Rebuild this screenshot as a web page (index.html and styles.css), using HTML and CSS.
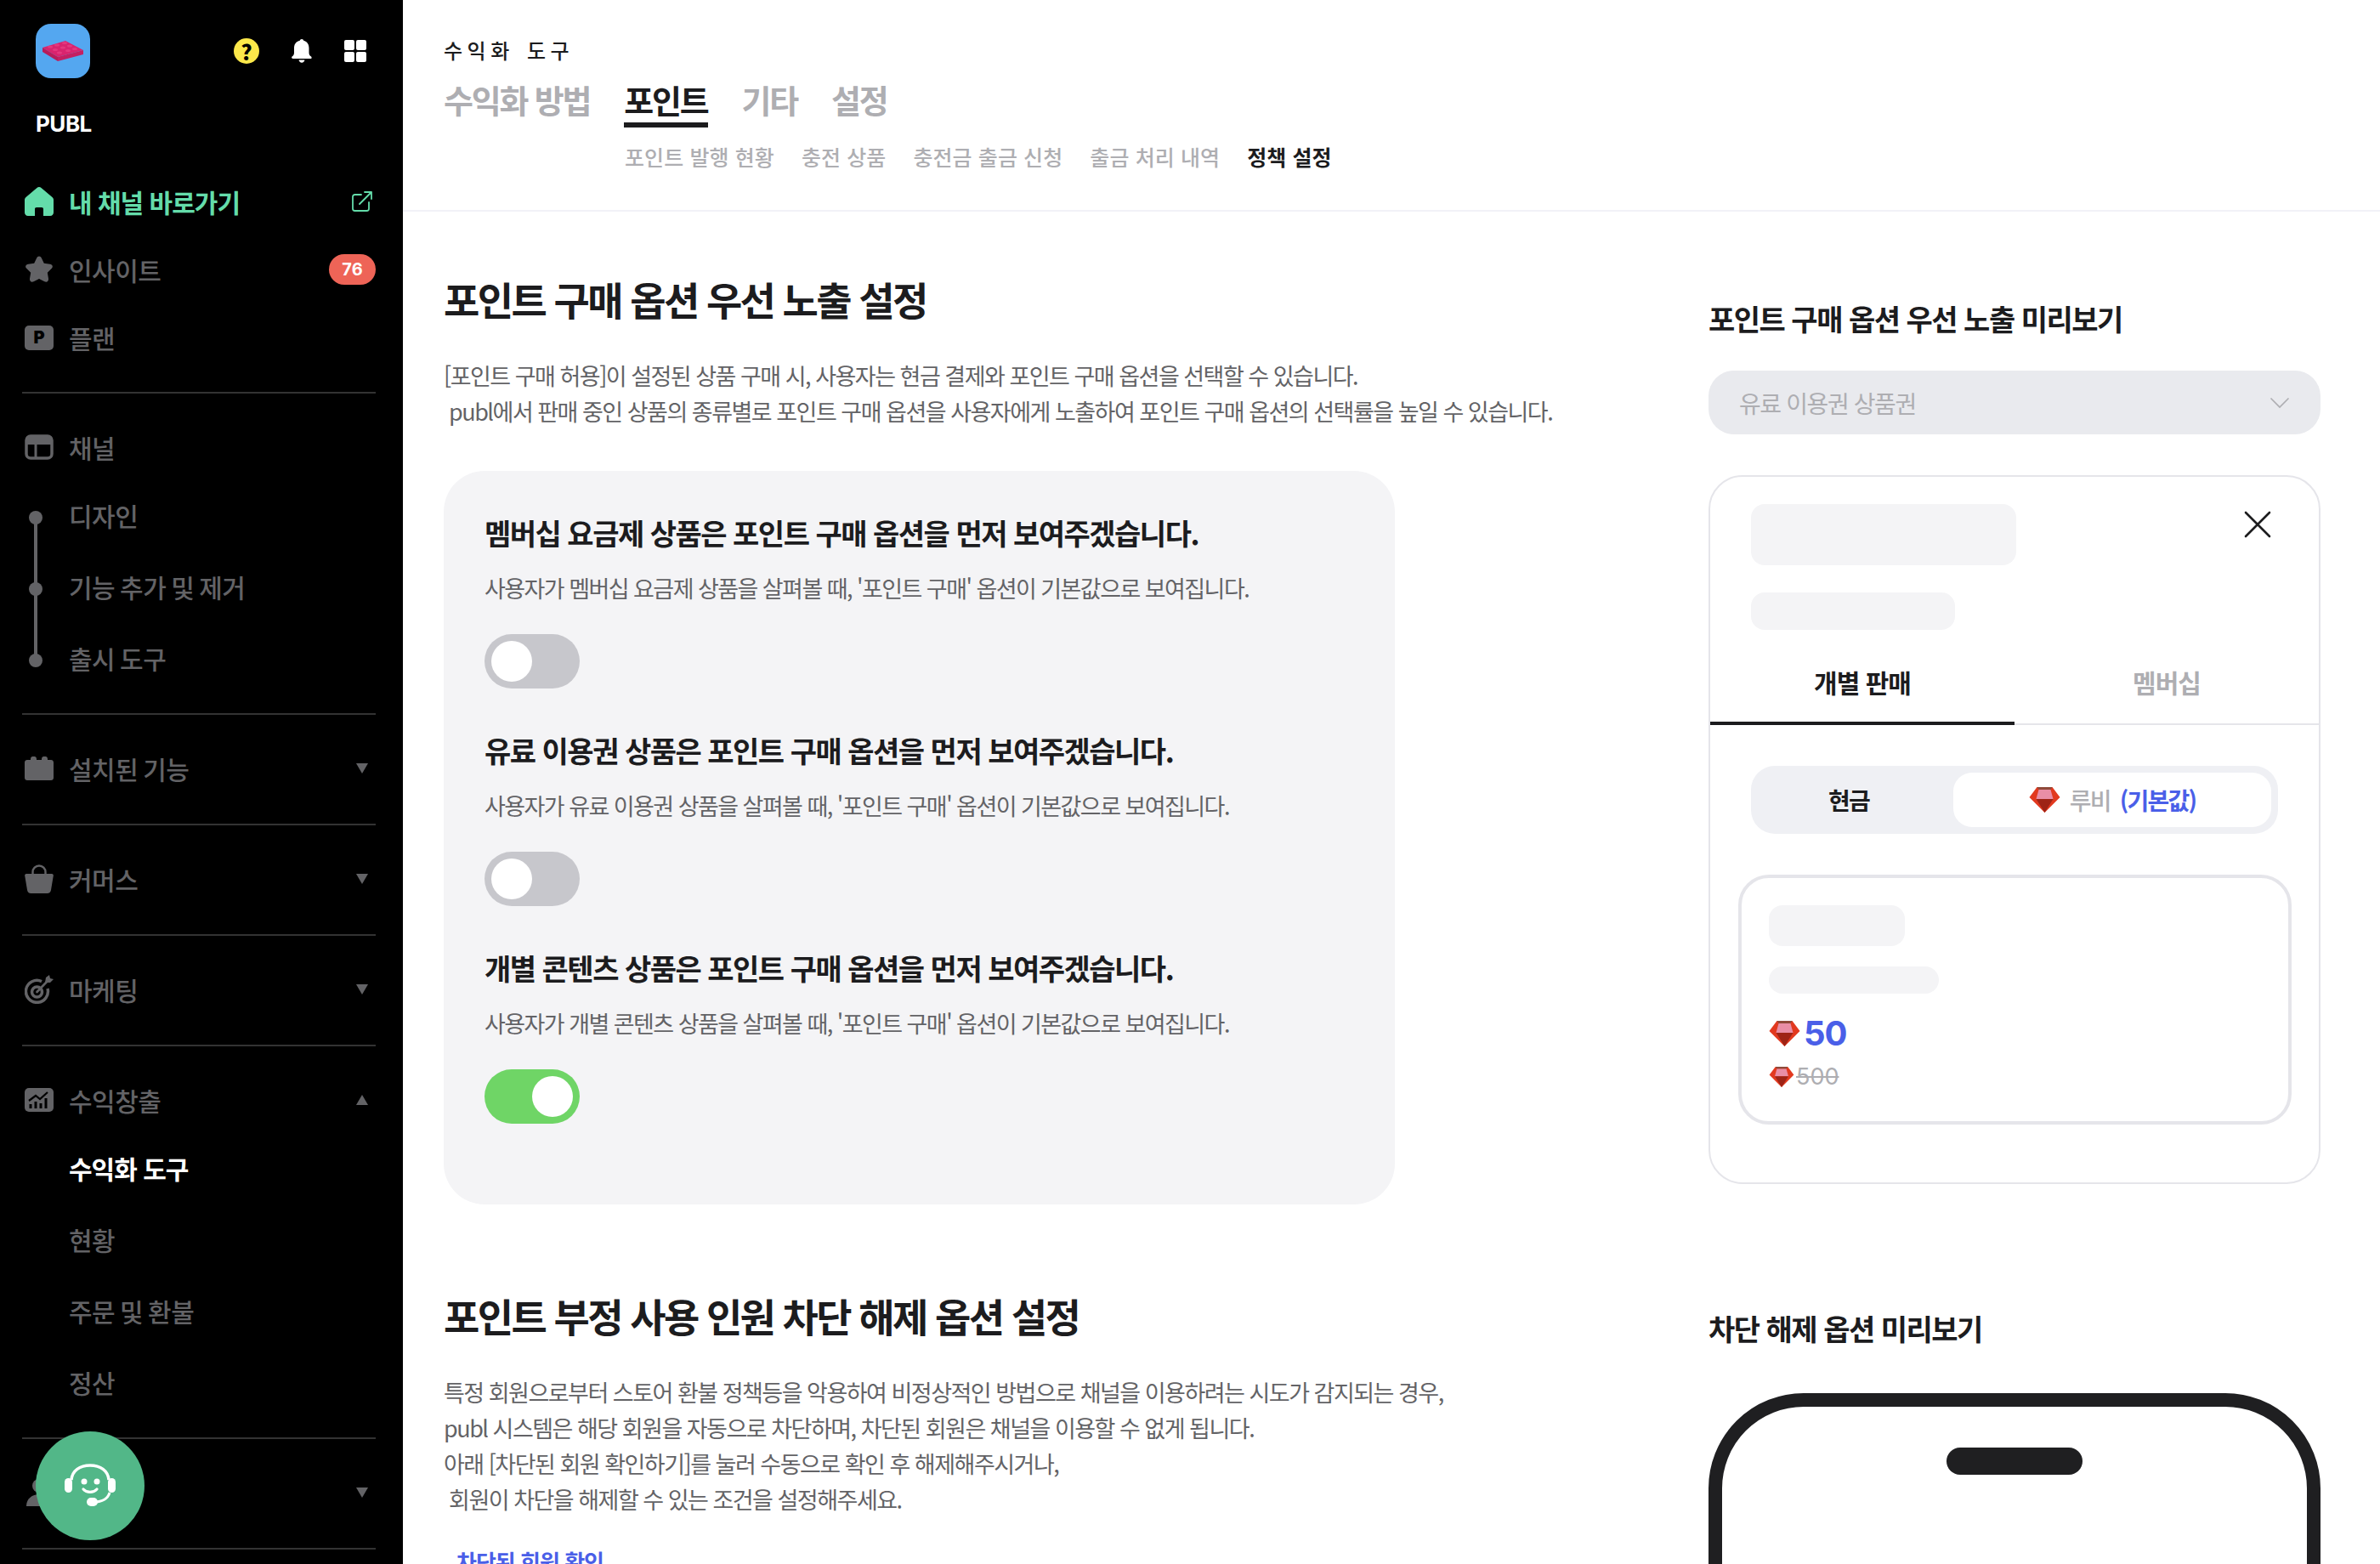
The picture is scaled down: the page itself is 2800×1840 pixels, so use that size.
FILE: index.html
```html
<!DOCTYPE html>
<html lang="ko">
<head>
    <meta charset="UTF-8">
    <meta name="viewport" content="width=device-width, initial-scale=1.0">
    <title>수익화 도구 - 포인트 정책 설정</title>
    <link rel="stylesheet" href="styles.css">
</head>
<body>

    <svg class="sprite" width="0" height="0">
        <symbol id="ruby" viewBox="0 0 36 30">
            <polygon points="9,0 27,0 36,12 18,30 0,12" fill="#e2391f"/>
            <polygon points="9,0 27,0 25,3 11,3" fill="#8f4a3a"/>
            <polygon points="11,3 25,3 28,14 8,14" fill="#e98ea6"/>
            <polygon points="8,14 28,14 18,30" fill="#9e2416"/>
        </symbol>
    </svg>

    <aside class="sidebar">
        <div class="side-top">
            <div class="logo">
                <svg width="48" height="24" viewBox="0 0 48 24">
                    <polygon points="0,8 27,0 48,11 18,19" fill="#d9246e"/>
                    <polygon points="0,8 18,19 18,24 0,13" fill="#b81c5a"/>
                    <polygon points="18,19 48,11 48,16 18,24" fill="#c41f62"/>
                    <g fill="#e4387e">
                        <ellipse cx="9" cy="7" rx="3" ry="1.6"/><ellipse cx="17" cy="5" rx="3" ry="1.6"/><ellipse cx="26" cy="2.500" rx="3" ry="1.6"/>
                        <ellipse cx="15" cy="10.500" rx="3" ry="1.6"/><ellipse cx="24" cy="8" rx="3" ry="1.6"/><ellipse cx="32" cy="6" rx="3" ry="1.6"/>
                        <ellipse cx="20" cy="14" rx="3" ry="1.6"/><ellipse cx="30" cy="11.500" rx="3" ry="1.6"/><ellipse cx="38" cy="9.500" rx="3" ry="1.6"/>
                    </g>
                </svg>
            </div>
            <div class="top-icons">
                <span class="help-icon">?</span>
                <svg width="24" height="28" viewBox="0 0 24 28" fill="#fff">
                    <path d="M12 0c1.200 0 2 .8 2.200 1.800C18.300 2.800 20.500 6.300 20.500 10.500v5.500c0 2 1 3.500 2.500 4.600.8.600 1 2.400-.6 2.400H1.600C0 23-.2 21.200.6 20.600 2.100 19.500 3 18 3 16v-5.500c0-4.200 2.200-7.700 6.800-8.700C10 .8 10.800 0 12 0z"/>
                    <path d="M8.500 24.500h7c-.3 2-1.700 3.200-3.500 3.200s-3.200-1.200-3.500-3.200z"/>
                </svg>
                <div class="grid-icon"><i></i><i></i><i></i><i></i></div>
            </div>
        </div>
        <div class="brand">PUBL</div>

        <div class="nav-group first">
            <a class="nav-item green">
                <svg class="nav-icon" viewBox="0 0 34 34" fill="#64dcaa"><path d="M17 0c1 0 1.800.4 2.500 1l13 11c1 .9 1.500 2 1.500 3.300V30c0 2-1.500 4-4 4h-8V26c0-1.300-.7-2-2-2h-6c-1.300 0-2 .7-2 2v8H4c-2.500 0-4-2-4-4V15.300C0 14 .5 12.900 1.500 12l13-11C15.200.4 16 0 17 0z"/></svg>
                <span>내 채널 바로가기</span>
                <svg class="item-end" width="24" height="24" viewBox="0 0 24 24" fill="none" stroke="#64dcaa" stroke-width="1.800" stroke-linecap="round" stroke-linejoin="round"><path d="M11 4H3.500C2 4 1 5 1 6.500v14C1 22 2 23 3.500 23h14c1.500 0 2.500-1 2.500-2.500V13"/><path d="M9 15L23 1M15 1h8v8"/></svg>
            </a>
            <a class="nav-item">
                <svg class="nav-icon" viewBox="0 0 34 34" fill="#636366"><path d="M17 1.500c1.300 0 2.200.8 2.800 2l3 6.300 7 1c3 .5 4 3 2 5l-5 5 1.200 7c.5 3-2 4.800-4.500 3.500L17 28l-6.500 3.300C8 32.600 5.500 30.800 6 27.800l1.200-7-5-5c-2-2-1-4.500 2-5l7-1 3-6.300c.6-1.200 1.500-2 2.800-2z"/></svg>
                <span>인사이트</span>
                <b class="badge">76</b>
            </a>
            <a class="nav-item">
                <span class="plan-icon">P</span>
                <span>플랜</span>
            </a>
        </div>

        <div class="nav-group">
            <a class="nav-item">
                <svg class="nav-icon" viewBox="0 0 34 30"><rect x="2" y="2" width="30" height="26" rx="5" fill="none" stroke="#636366" stroke-width="3.500"/><path d="M2 12V6a4 4 0 0 1 4-4h22a4 4 0 0 1 4 4v6z" fill="#636366"/><path d="M13 12v15" stroke="#636366" stroke-width="3"/></svg>
                <span>채널</span>
            </a>
            <div class="timeline">
                <a class="sub-item dotted">디자인</a>
                <a class="sub-item dotted">기능 추가 및 제거</a>
                <a class="sub-item dotted">출시 도구</a>
            </div>
        </div>

        <div class="nav-group">
            <a class="nav-item">
                <svg class="nav-icon" viewBox="0 0 34 28" fill="#636366"><path d="M3 4h4V3c0-1.700 1-3 2.500-3h2C13 0 14 1.300 14 3v1h6V3c0-1.700 1-3 2.500-3h2C26 0 27 1.300 27 3v1h4c1.700 0 3 1.300 3 3v18c0 1.700-1.300 3-3 3H3c-1.700 0-3-1.300-3-3V7c0-1.700 1.300-3 3-3z"/></svg>
                <span>설치된 기능</span>
                <i class="caret item-end"></i>
            </a>
        </div>

        <div class="nav-group">
            <a class="nav-item">
                <svg class="nav-icon" viewBox="0 0 34 34"><path d="M9.500 12V9a7.500 7.500 0 0 1 15 0v3" fill="none" stroke="#636366" stroke-width="2.400"/><path d="M2 11h30c1.200 0 2 1 1.800 2.200L31 30c-.4 2.400-2 4-4.500 4h-19C5 34 3.400 32.400 3 30L.2 13.200C0 12 .8 11 2 11z" fill="#636366"/></svg>
                <span>커머스</span>
                <i class="caret item-end"></i>
            </a>
        </div>

        <div class="nav-group">
            <a class="nav-item">
                <svg class="nav-icon" viewBox="0 0 34 34" fill="none" stroke="#636366"><path d="M20 7.600A13 13 0 1 0 27 16" stroke-width="3.500"/><circle cx="14.500" cy="20" r="6" stroke-width="3.500"/><path d="M14.500 20L27 7" stroke-width="2.600" stroke-linecap="round"/><path d="M24 9l1-6 4-3 1 4 4 1-4 4z" fill="#636366" stroke="none"/></svg>
                <span>마케팅</span>
                <i class="caret item-end"></i>
            </a>
        </div>

        <div class="nav-group">
            <a class="nav-item">
                <svg class="nav-icon" viewBox="0 0 34 28"><rect width="34" height="28" rx="5" fill="#636366"/><path d="M5 15l8-6 5 4 9-8" fill="none" stroke="#000" stroke-width="2.200"/><path d="M7 24v-5M13 24v-8M19 24v-6M25 24V12" stroke="#000" stroke-width="3"/></svg>
                <span>수익창출</span>
                <i class="caret up item-end"></i>
            </a>
            <div class="sub-list">
                <a class="sub-item active">수익화 도구</a>
                <a class="sub-item">현황</a>
                <a class="sub-item">주문 및 환불</a>
                <a class="sub-item">정산</a>
            </div>
        </div>

        <div class="nav-group">
            <a class="nav-item">
                <svg class="nav-icon" viewBox="0 0 34 34" fill="#636366"><circle cx="17" cy="9" r="8"/><path d="M2 33c0-9 7-14 15-14s15 5 15 14z"/></svg>
                <span>멤버</span>
                <i class="caret item-end"></i>
            </a>
        </div>
    </aside>

    <button class="help-fab">
        <svg width="60" height="52" viewBox="0 0 60 52" fill="none">
            <path d="M8 19C9 8 18 2 30 2s21 6 22 17" stroke="#fff" stroke-width="3.500"/>
            <rect x="0" y="17" width="9" height="17" rx="4.500" fill="#fff"/>
            <rect x="51" y="17" width="9" height="17" rx="4.500" fill="#fff"/>
            <circle cx="23" cy="21" r="3.500" fill="#fff"/>
            <circle cx="38" cy="21" r="3.500" fill="#fff"/>
            <path d="M22 30c4 4.500 12 4.500 16 0" stroke="#fff" stroke-width="3.200" stroke-linecap="round"/>
            <path d="M53 34c-2 7-9 11-18 11" stroke="#fff" stroke-width="3"/>
            <rect x="26" y="40" width="13" height="10" rx="5" fill="#fff"/>
        </svg>
    </button>

    <div class="main">
        <header class="page-head">
            <p class="crumb">수익화 도구</p>
            <nav class="tabs">
                <a>수익화 방법</a>
                <a class="active">포인트</a>
                <a>기타</a>
                <a>설정</a>
            </nav>
            <nav class="subtabs">
                <a>포인트 발행 현황</a>
                <a>충전 상품</a>
                <a>충전금 출금 신청</a>
                <a>출금 처리 내역</a>
                <a class="active">정책 설정</a>
            </nav>
        </header>

        <div class="content">
            <section class="settings">
                <h2 class="section-title">포인트 구매 옵션 우선 노출 설정</h2>
                <p class="section-desc">[포인트 구매 허용]이 설정된 상품 구매 시, 사용자는 현금 결제와 포인트 구매 옵션을 선택할 수 있습니다.<br>&nbsp;publ에서 판매 중인 상품의 종류별로 포인트 구매 옵션을 사용자에게 노출하여 포인트 구매 옵션의 선택률을 높일 수 있습니다.</p>

                <div class="option-card">
                    <div class="option">
                        <h3>멤버십 요금제 상품은 포인트 구매 옵션을 먼저 보여주겠습니다.</h3>
                        <p>사용자가 멤버십 요금제 상품을 살펴볼 때, '포인트 구매' 옵션이 기본값으로 보여집니다.</p>
                        <div class="toggle"><span></span></div>
                    </div>
                    <div class="option">
                        <h3>유료 이용권 상품은 포인트 구매 옵션을 먼저 보여주겠습니다.</h3>
                        <p>사용자가 유료 이용권 상품을 살펴볼 때, '포인트 구매' 옵션이 기본값으로 보여집니다.</p>
                        <div class="toggle"><span></span></div>
                    </div>
                    <div class="option">
                        <h3>개별 콘텐츠 상품은 포인트 구매 옵션을 먼저 보여주겠습니다.</h3>
                        <p>사용자가 개별 콘텐츠 상품을 살펴볼 때, '포인트 구매' 옵션이 기본값으로 보여집니다.</p>
                        <div class="toggle on"><span></span></div>
                    </div>
                </div>

                <h2 class="section-title second">포인트 부정 사용 인원 차단 해제 옵션 설정</h2>
                <p class="section-desc">특정 회원으로부터 스토어 환불 정책등을 악용하여 비정상적인 방법으로 채널을 이용하려는 시도가 감지되는 경우,<br>publ 시스템은 해당 회원을 자동으로 차단하며, 차단된 회원은 채널을 이용할 수 없게 됩니다.<br>아래 [차단된 회원 확인하기]를 눌러 수동으로 확인 후 해제해주시거나,<br>&nbsp;회원이 차단을 해제할 수 있는 조건을 설정해주세요.</p>
                <a class="text-link">차단된 회원 확인</a>
            </section>

            <section class="previews">
                <h3 class="preview-title">포인트 구매 옵션 우선 노출 미리보기</h3>
                <div class="select">
                    <span>유료 이용권 상품권</span>
                    <svg width="24" height="14" viewBox="0 0 24 14" fill="none" stroke="#aeaeb2" stroke-width="1.700" stroke-linecap="round"><path d="M2 2l10 10L22 2"/></svg>
                </div>

                <div class="preview-card">
                    <div class="preview-head">
                        <div>
                            <div class="skeleton sk-title"></div>
                            <div class="skeleton sk-sub"></div>
                        </div>
                        <svg width="32" height="32" viewBox="0 0 32 32" fill="none" stroke="#1c1c1e" stroke-width="2.600" stroke-linecap="round"><path d="M2 2l28 28M30 2L2 30"/></svg>
                    </div>
                    <div class="preview-tabs">
                        <a class="active">개별 판매</a>
                        <a>멤버십</a>
                    </div>
                    <div class="segment">
                        <span class="seg-cash">현금</span>
                        <span class="seg-ruby">
                            <svg width="37" height="30"><use href="#ruby"/></svg>
                            <em>루비</em>
                            <b>(기본값)</b>
                        </span>
                    </div>
                    <div class="product">
                        <div class="skeleton sk-name"></div>
                        <div class="skeleton sk-line"></div>
                        <div class="price">
                            <svg width="37" height="30"><use href="#ruby"/></svg>
                            <b>50</b>
                        </div>
                        <div class="price-old">
                            <svg width="30" height="24"><use href="#ruby"/></svg>
                            <s>500</s>
                        </div>
                    </div>
                </div>

                <h3 class="preview-title second">차단 해제 옵션 미리보기</h3>
                <div class="phone"><div class="notch"></div></div>
            </section>
        </div>
    </div>

</body>
</html>
```

FILE: styles.css
```css
* {
    box-sizing: border-box;
}

html, body {
    height: 100%;
}

body {
    margin: 0;
    display: flex;
    overflow: hidden;
    font-family: "Noto Sans CJK KR", "Noto Sans", sans-serif;
    background-color: #fff;
    color: #1c1c1e;
}

h2, h3, p {
    margin: 0;
}

.sprite {
    position: absolute;
}

/* sidebar */
.sidebar {
    width: 474px;
    flex-shrink: 0;
    height: 100%;
    overflow: hidden;
    background-color: #000;
    padding: 28px 32px 0 26px;
}

.side-top {
    display: flex;
    justify-content: space-between;
    align-items: center;
    padding-left: 16px;
}

.logo {
    width: 64px;
    height: 64px;
    border-radius: 18px;
    background-color: #54a7f0;
    display: flex;
    align-items: center;
    justify-content: center;
}

.top-icons {
    display: flex;
    align-items: center;
    gap: 38px;
    padding-right: 11px;
}

.help-icon {
    width: 30px;
    height: 30px;
    border-radius: 50%;
    background-color: #fce84a;
    color: #000;
    font-size: 25px;
    line-height: 30px;
    font-weight: 900;
    text-align: center;
}

.grid-icon {
    display: grid;
    grid-template-columns: 12px 12px;
    gap: 2px;
}

.grid-icon i {
    height: 12px;
    border-radius: 2px;
    background-color: #fff;
}

.brand {
    margin-top: 36px;
    padding-left: 16px;
    color: #fff;
    font-size: 26px;
    line-height: 36px;
    font-weight: 700;
    letter-spacing: -0.5px;
    font-family: "Inter", "Noto Sans CJK KR", sans-serif;
}

.nav-group {
    padding: 24px 0;
    border-bottom: 2px solid #333;
}

.nav-group.first {
    margin-top: 34px;
    padding: 0 0 23px;
}

.nav-item {
    display: flex;
    align-items: center;
    height: 80px;
    padding: 0 0 2px 3px;
    color: #636366;
    font-size: 30px;
    font-weight: 500;
    letter-spacing: -0.5px;
    word-spacing: -2px;
}

.nav-item.green {
    color: #64dcaa;
    font-weight: 700;
    letter-spacing: -1px;
    word-spacing: 0;
}

.nav-icon {
    width: 34px;
    height: 34px;
    margin-right: 18px;
    flex-shrink: 0;
}

.item-end {
    margin-left: auto;
}

.badge {
    width: 55px;
    height: 36px;
    border-radius: 18px;
    margin-left: auto;
    background-color: #ee6457;
    color: #fff;
    font-size: 20px;
    line-height: 36px;
    text-align: center;
    letter-spacing: 0;
    font-family: "Inter", sans-serif;
}

.nav-item svg.item-end {
    margin-right: 4px;
}

.plan-icon {
    width: 34px;
    height: 29px;
    margin-right: 18px;
    border-radius: 5px;
    background-color: #636366;
    color: #000;
    font-size: 20px;
    line-height: 29px;
    font-weight: 900;
    text-align: center;
    letter-spacing: 0;
    font-family: "Inter", sans-serif;
}

.caret {
    width: 0;
    height: 0;
    margin-right: 9px;
    border-left: 7.5px solid transparent;
    border-right: 7.5px solid transparent;
    border-top: 12px solid #636366;
}

.caret.up {
    border-top: 0;
    border-bottom: 12px solid #636366;
}

.sub-item {
    display: flex;
    align-items: center;
    height: 84px;
    padding: 0 0 2px 55px;
    color: #636366;
    font-size: 30px;
    font-weight: 500;
    letter-spacing: -0.5px;
    word-spacing: -2px;
}

.sub-item.active {
    color: #fff;
    font-weight: 700;
    letter-spacing: -1px;
    word-spacing: 0;
}

.timeline,
.sub-list {
    position: relative;
    margin: -2px 0;
}

.sub-item.dotted {
    position: relative;
}

.sub-item.dotted::before {
    content: "";
    position: absolute;
    left: 8px;
    top: 36px;
    width: 16px;
    height: 16px;
    border-radius: 50%;
    background-color: #636366;
}

.timeline::after {
    content: "";
    position: absolute;
    left: 14px;
    top: 44px;
    width: 4px;
    height: 168px;
    background-color: #636366;
}

.help-fab {
    position: absolute;
    left: 42px;
    top: 1684px;
    width: 128px;
    height: 128px;
    border: none;
    border-radius: 50%;
    background-color: #52b788;
    display: flex;
    align-items: center;
    justify-content: center;
    padding: 0;
}

/* main */
.main {
    flex: 1;
    min-width: 0;
}

.page-head {
    height: 249px;
    padding: 44px 48px 0;
    border-bottom: 2px solid #f2f2f7;
}

.crumb {
    font-size: 24px;
    line-height: 30px;
    font-weight: 500;
    letter-spacing: 5.500px;
    word-spacing: 3px;
}

.tabs {
    display: flex;
    gap: 40px;
    margin-top: 13px;
    color: #aeaeb2;
    font-size: 38px;
    line-height: 60px;
    font-weight: 600;
    letter-spacing: -2.200px;
}

.tabs .active {
    color: #1c1c1e;
    font-weight: 700;
    height: 63px;
    border-bottom: 6px solid #1c1c1e;
}

.subtabs {
    display: flex;
    gap: 32px;
    margin: 10px 0 0 213px;
    color: #aeaeb2;
    font-size: 25px;
    line-height: 48px;
    font-weight: 500;
    letter-spacing: 0.100px;
}

.subtabs .active {
    color: #1c1c1e;
    font-weight: 700;
}

.content {
    display: flex;
    padding: 0 70px 0 48px;
}

.settings {
    width: 1488px;
    flex-shrink: 0;
    padding-top: 68px;
}

.section-title {
    font-size: 46px;
    line-height: 68px;
    font-weight: 700;
    letter-spacing: -2.600px;
}

.section-title.second {
    margin-top: 96px;
}

.section-desc {
    margin-top: 36px;
    color: #636366;
    font-size: 27px;
    line-height: 42px;
    letter-spacing: -1.500px;
    white-space: nowrap;
}

.option-card {
    width: 1119px;
    height: 863px;
    margin-top: 49px;
    padding: 48px 48px 0;
    border-radius: 48px;
    background-color: #f4f4f6;
}

.option {
    height: 256px;
}

.option h3 {
    font-size: 34px;
    line-height: 50px;
    font-weight: 700;
    letter-spacing: -1.500px;
}

.option p {
    margin-top: 20px;
    color: #636366;
    font-size: 27px;
    line-height: 40px;
    letter-spacing: -1.550px;
}

.toggle {
    width: 112px;
    height: 64px;
    margin-top: 34px;
    padding: 8px;
    border-radius: 32px;
    background-color: #c7c7cc;
}

.toggle span {
    display: block;
    width: 48px;
    height: 48px;
    border-radius: 50%;
    background-color: #fff;
}

.toggle.on {
    background-color: #6fd566;
    display: flex;
    justify-content: flex-end;
}

.text-link {
    display: block;
    margin: 32px 0 0 15px;
    color: #4a5fe8;
    font-size: 26px;
    line-height: 40px;
    font-weight: 700;
    letter-spacing: -1px;
}

/* preview column */
.previews {
    flex: 1;
    min-width: 0;
    padding-top: 100px;
}

.preview-title {
    font-size: 34px;
    line-height: 52px;
    font-weight: 700;
    letter-spacing: -1.500px;
}

.preview-title.second {
    margin-top: 144px;
}

.select {
    display: flex;
    align-items: center;
    justify-content: space-between;
    height: 75px;
    margin-top: 35px;
    padding: 0 36px;
    border-radius: 30px;
    background-color: #e9eaee;
    color: #aeaeb2;
    font-size: 28px;
    letter-spacing: -1.400px;
}

.preview-card {
    height: 834px;
    margin-top: 48px;
    border: 2px solid #e5e5ea;
    border-radius: 40px;
}

.preview-head {
    display: flex;
    justify-content: space-between;
    padding: 32px 56px 0 48px;
    height: 220px;
}

.preview-head svg {
    margin-top: 8px;
}

.skeleton {
    border-radius: 16px;
    background-color: #f4f4f6;
}

.sk-title {
    width: 312px;
    height: 72px;
}

.sk-sub {
    width: 240px;
    height: 44px;
    margin-top: 32px;
}

.preview-tabs {
    display: flex;
    height: 72px;
    border-bottom: 2px solid #e5e5ea;
    color: #aeaeb2;
    font-size: 30px;
    line-height: 43px;
    font-weight: 700;
    letter-spacing: -1px;
    text-align: center;
}

.preview-tabs a {
    flex: 1;
}

.preview-tabs .active {
    height: 72px;
    color: #1c1c1e;
    border-bottom: 4px solid #1c1c1e;
}

.segment {
    display: flex;
    align-items: center;
    width: 620px;
    height: 80px;
    margin: 48px 0 0 48px;
    padding-right: 8px;
    border-radius: 28px;
    background-color: #eff0f4;
    font-size: 28px;
    font-weight: 700;
    letter-spacing: -1.800px;
}

.seg-cash {
    width: 230px;
    margin-right: 8px;
    text-align: center;
}

.seg-ruby {
    flex: 1;
    height: 64px;
    display: flex;
    align-items: center;
    justify-content: center;
    gap: 11px;
    border-radius: 22px;
    background-color: #fff;
}

.seg-ruby em {
    font-style: normal;
    font-weight: 500;
    color: #aeaeb2;
}

.seg-ruby b {
    color: #4a5fe8;
    font-weight: 600;
}

.product {
    width: 651px;
    height: 294px;
    margin: 48px 0 0 33px;
    padding: 32px 32px 0;
    border: 4px solid #e5e5ea;
    border-radius: 36px;
}

.sk-name {
    width: 160px;
    height: 48px;
}

.sk-line {
    width: 200px;
    height: 32px;
    margin-top: 24px;
}

.price {
    display: flex;
    align-items: center;
    gap: 4px;
    margin-top: 21px;
    color: #4a5fe8;
    font-size: 40px;
    line-height: 52px;
    font-family: "Inter", sans-serif;
    letter-spacing: -1px;
}

.price-old {
    display: flex;
    align-items: center;
    gap: 2px;
    margin-top: 7px;
    color: #aeaeb2;
    font-size: 27px;
    line-height: 36px;
    font-family: "Inter", sans-serif;
}

.phone {
    position: relative;
    height: 400px;
    margin-top: 50px;
    border: 16px solid #1f1f21;
    border-radius: 112px;
}

.notch {
    position: absolute;
    left: 50%;
    top: 48px;
    width: 160px;
    height: 32px;
    margin-left: -80px;
    border-radius: 16px;
    background-color: #1f1f21;
}
```
